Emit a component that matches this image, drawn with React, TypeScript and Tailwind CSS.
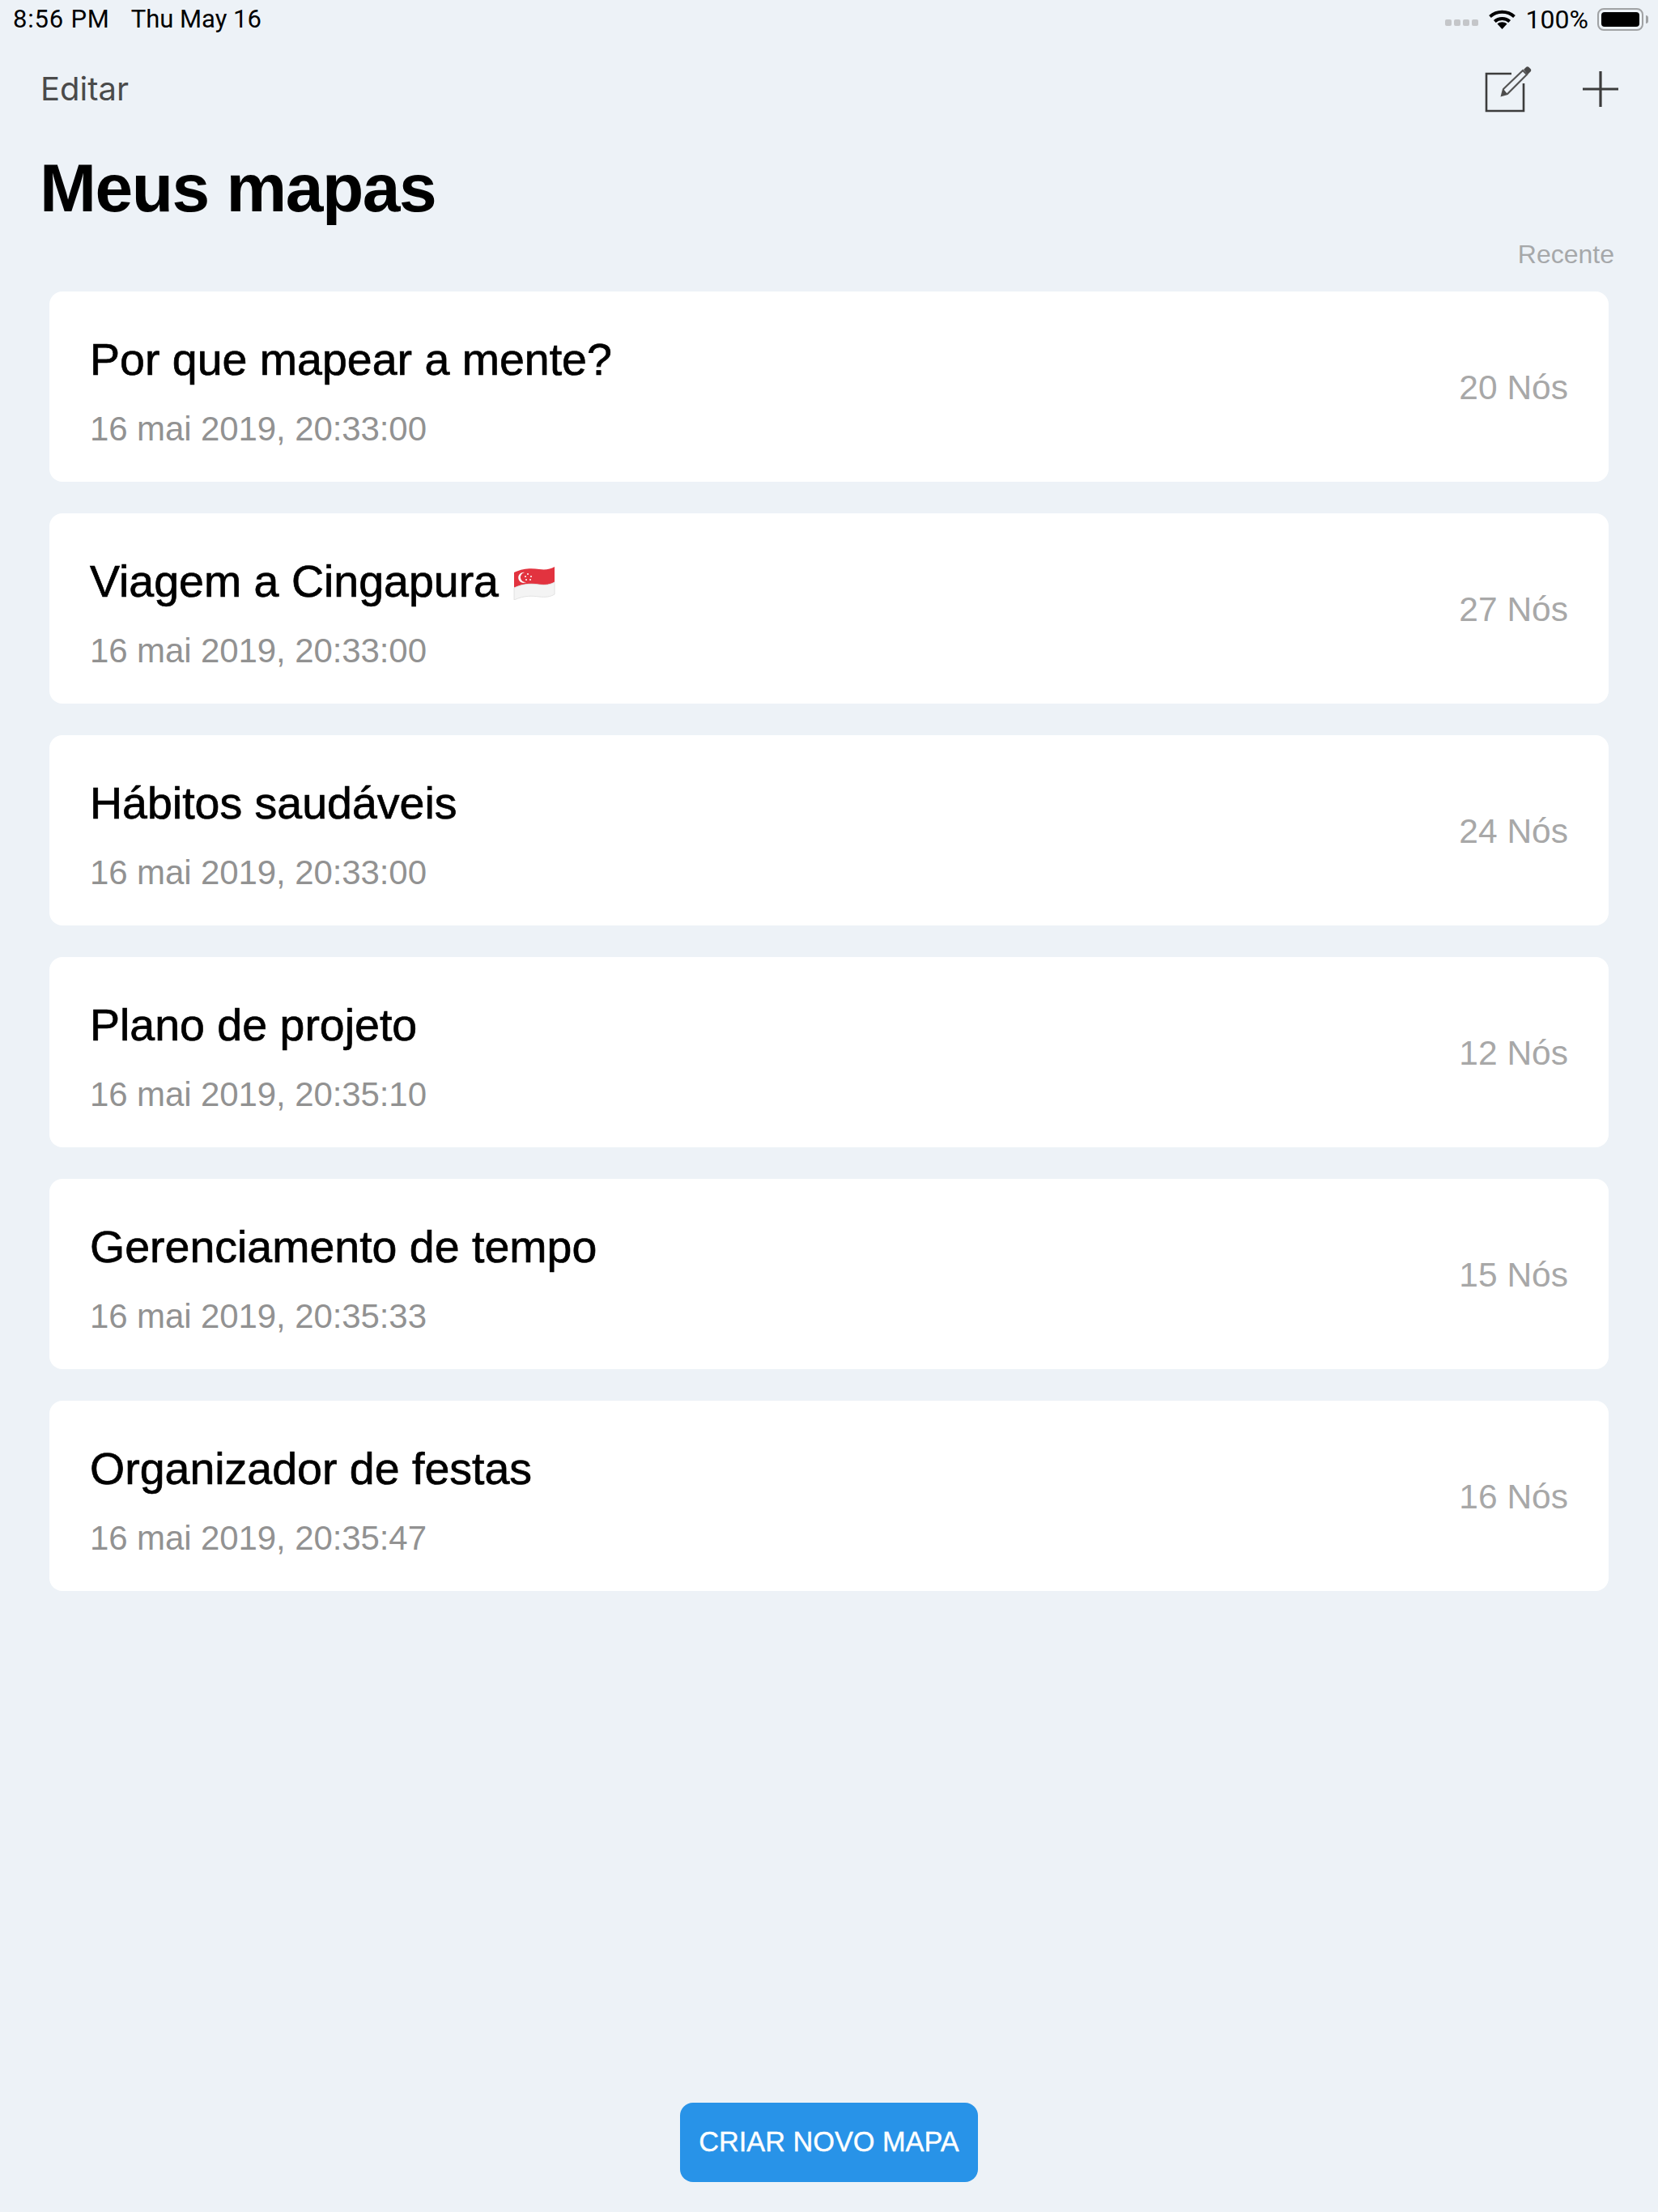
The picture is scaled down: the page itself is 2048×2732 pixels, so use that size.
const maps = [
  { title: 'Por que mapear a mente?', date: '16 mai 2019, 20:33:00', nodes: '20 Nós' },
  { title: 'Viagem a Cingapura', flag: true, date: '16 mai 2019, 20:33:00', nodes: '27 Nós' },
  { title: 'Hábitos saudáveis', date: '16 mai 2019, 20:33:00', nodes: '24 Nós' },
  { title: 'Plano de projeto', date: '16 mai 2019, 20:35:10', nodes: '12 Nós' },
  { title: 'Gerenciamento de tempo', date: '16 mai 2019, 20:35:33', nodes: '15 Nós' },
  { title: 'Organizador de festas', date: '16 mai 2019, 20:35:47', nodes: '16 Nós' },
];

function Flag() {
  return (
    <svg width="52" height="44" viewBox="0 0 52 44" className="ml-[18px] shrink-0">
      <path d="M1 10 C14 4 24 5 32 6 C40 7 46 6 51 3 L51 22 C46 25 40 26 32 25 C24 24 14 23 1 29 Z" fill="#e2333f" />
      <path d="M1 29 C14 23 24 24 32 25 C40 26 46 25 51 22 L51 37 C46 40 40 41 32 40 C24 39 14 38 1 44 Z" fill="#f4f4f4" stroke="#dddddd" strokeWidth="0.8" />
      <path d="M14 10 a6.5 6.5 0 1 0 2 12 a5.5 5.5 0 1 1 -2 -12 Z" fill="#ffffff" />
      <circle cx="18" cy="12" r="1" fill="#ffffff" />
      <circle cx="22" cy="15" r="1" fill="#ffffff" />
      <circle cx="21" cy="19" r="1" fill="#ffffff" />
      <circle cx="16" cy="19" r="1" fill="#ffffff" />
      <circle cx="15" cy="15" r="1" fill="#ffffff" />
    </svg>
  );
}

function Wifi() {
  return (
    <svg width="35" height="24" viewBox="0 0 35 24">
      <path d="M17.5 24 L11.5 17.5 C15 14.6 20 14.6 23.5 17.5 Z" fill="#000000" />
      <path d="M8.3 14.5 C13.3 9.8 21.7 9.8 26.7 14.5" fill="none" stroke="#000000" strokeWidth="4" />
      <path d="M2.5 8.5 C11 0.8 24 0.8 32.5 8.5" fill="none" stroke="#000000" strokeWidth="4" />
    </svg>
  );
}

function Battery() {
  return (
    <div className="flex items-center">
      <div className="w-[57px] h-[28px] rounded-[8px] border-2 border-[#a0a2a4] p-[3px]">
        <div className="w-full h-full rounded-[4px] bg-black" />
      </div>
      <div className="w-[3px] h-[10px] rounded-r-[3px] bg-[#a0a2a4] ml-[3px]" />
    </div>
  );
}

function ComposeIcon() {
  return (
    <svg width="60" height="60" viewBox="0 0 60 60">
      <path d="M33 11 H2 V57 H48 V23" fill="none" stroke="#3c3c3c" strokeWidth="2.6" />
      <path d="M23 30 L47 7 L52 12 L28 36 L21 38 Z" fill="none" stroke="#555555" strokeWidth="2.2" />
      <path d="M21 38 L23 30 L28 36 Z" fill="#4a4a4a" />
      <path d="M48 6 L51 3 C52 2 53.5 2 54.5 3 L56.5 5 C57.5 6 57.5 7.5 56.5 8.5 L53 12 Z" fill="#4a4a4a" />
    </svg>
  );
}

function PlusIcon() {
  return (
    <svg width="44" height="44" viewBox="0 0 44 44">
      <path d="M22 0 V44 M0 22 H44" fill="none" stroke="#3c3c3c" strokeWidth="3.2" />
    </svg>
  );
}

export default function App() {
  return (
    <div className="w-[2048px] h-[2732px] bg-[#edf2f7] flex flex-col font-['Liberation_Sans',sans-serif]">
      <div className="h-[48px] pl-[16px] pr-[12px] flex items-center justify-between font-['Roboto',sans-serif] text-[31px] text-black">
        <div className="flex gap-[26px]">
          <span className="tracking-[0.8px]">8:56 PM</span>
          <span>Thu May 16</span>
        </div>
        <div className="flex items-center">
          <div className="flex gap-[3px] mt-[8px] mr-[12px]">
            <span className="w-[8px] h-[8px] rounded-[2px] bg-[#c4c6c9]" />
            <span className="w-[8px] h-[8px] rounded-[2px] bg-[#c4c6c9]" />
            <span className="w-[8px] h-[8px] rounded-[2px] bg-[#c4c6c9]" />
            <span className="w-[8px] h-[8px] rounded-[2px] bg-[#c4c6c9]" />
          </div>
          <Wifi />
          <span className="ml-[12px] mr-[11px] text-[32px]">100%</span>
          <Battery />
        </div>
      </div>

      <div className="h-[124px] pl-[50px] pr-[49px] flex items-center justify-between">
        <span className="font-['Inter',sans-serif] text-[40px] text-[#4a4a4a]">Editar</span>
        <div className="flex items-center gap-[61px]">
          <ComposeIcon />
          <PlusIcon />
        </div>
      </div>

      <h1 className="mt-[10px] pl-[49px] text-[84px] leading-[100px] font-bold text-black tracking-[-1.5px]">Meus mapas</h1>

      <div className="mt-[12px] pr-[54px] text-right text-[32px] leading-[40px] text-[#a6a8aa]">Recente</div>

      <div className="mt-[26px] mx-[61px] flex flex-col gap-[39px]">
        {maps.map((m) => (
          <div key={m.title} className="h-[235px] bg-white rounded-[16px] pl-[50px] pr-[50px] flex items-center justify-between">
            <div className="mt-[15px]">
              <div className="flex items-center h-[60px] text-[55.5px] text-black [-webkit-text-stroke:0.7px_#000000]">
                {m.title}
                {m.flag && <Flag />}
              </div>
              <div className="mt-[30px] text-[42px] leading-[50px] tracking-[-0.1px] text-[#929292]">{m.date}</div>
            </div>
            <div className="mt-[3px] text-[42.5px] text-[#a8a8a8]">{m.nodes}</div>
          </div>
        ))}
      </div>

      <div className="flex-1 flex items-end justify-center pb-[37px]">
        <button className="w-[368px] h-[98px] rounded-[16px] bg-[#2893e8] text-white text-[34.3px] [-webkit-text-stroke:0.4px_#ffffff]">CRIAR NOVO MAPA</button>
      </div>
    </div>
  );
}
